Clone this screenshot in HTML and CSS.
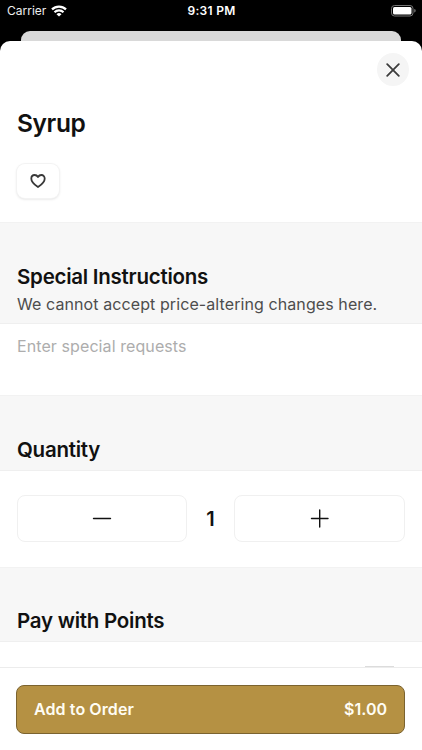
FILE: index.html
```html
<!DOCTYPE html>
<html lang="en">
<head>
<meta charset="utf-8">
<meta name="viewport" content="width=device-width, initial-scale=1">
<title>Syrup</title>
<link rel="stylesheet" href="styles.css">
</head>
<body>
<div class="screen">
  <header class="status">
    <div class="status-left">
      <span class="carrier">Carrier</span>
      <svg class="wifi" width="16" height="12" viewBox="0 0 16 12" fill="none" stroke="#fff" stroke-width="2.2">
        <path d="M1 4.400a10 10 0 0 1 14 0"/>
        <path d="M3.500 7.200a6.400 6.400 0 0 1 9 0"/>
        <path d="M8 11.600 5.500 9.200a3.600 3.600 0 0 1 5 0z" fill="#fff" stroke="none"/>
      </svg>
    </div>
    <span class="time">9:31 PM</span>
    <div class="status-right">
      <svg width="25" height="12" viewBox="0 0 25 12">
        <rect x="0.5" y="0.5" width="21.5" height="10.5" rx="3" fill="none" stroke="#747474"/>
        <rect x="2" y="2" width="18.5" height="7.500" rx="1.5" fill="#fff"/>
        <path d="M23.300 4v3.500c.9-.3 1.300-1 1.300-1.800s-.4-1.500-1.300-1.700z" fill="#858585"/>
      </svg>
    </div>
  </header>
  <div class="back-card"></div>
  <main class="sheet">
    <section class="product">
      <button class="close" aria-label="Close">
        <svg width="14" height="14" viewBox="0 0 14 14" stroke="#3c3c3c" stroke-width="1.8" stroke-linecap="round"><path d="M1.200 1.200l11.600 11.600M12.800 1.200L1.200 12.800"/></svg>
      </button>
      <h1>Syrup</h1>
      <button class="favorite" aria-label="Favorite">
        <svg width="16" height="14" viewBox="0 0 16 14" fill="none" stroke="#383838" stroke-width="1.8" stroke-linejoin="round"><path d="M8 3C7 1.400 5.800 1 4.700 1 2.600 1 1.300 2.600 1.300 4.700 1.300 8.200 5.400 11.300 8 13c2.600-1.700 6.700-4.800 6.700-8.300C14.700 2.600 13.400 1 11.300 1 10.200 1 9 1.400 8 3z"/></svg>
      </button>
    </section>
    <section class="group-head instructions-head">
      <h2>Special Instructions</h2>
      <p>We cannot accept price-altering changes here.</p>
    </section>
    <section class="request">Enter special requests</section>
    <section class="group-head quantity-head"><h2>Quantity</h2></section>
    <section class="stepper">
      <button class="step" aria-label="Decrease">
        <svg width="20" height="20" viewBox="0 0 20 20" stroke="#111" stroke-width="1.4" stroke-linecap="round"><path d="M1.500 9.500h17"/></svg>
      </button>
      <span class="count">1</span>
      <button class="step" aria-label="Increase">
        <svg width="20" height="20" viewBox="0 0 20 20" stroke="#111" stroke-width="1.4" stroke-linecap="round"><path d="M1.500 9.500h16.500M9.700 1v17"/></svg>
      </button>
    </section>
    <section class="group-head points-head"><h2>Pay with Points</h2></section>
    <section class="points"><span class="toggle"></span></section>
    <footer class="bar">
      <button class="add"><span>Add to Order</span><span class="price">$1.00</span></button>
    </footer>
  </main>
</div>
</body>
</html>
```
FILE: styles.css
```css
* { box-sizing: border-box; }
body { margin: 0; background: #000; font-family: Inter, "Liberation Sans", sans-serif; }
h1, h2, p { margin: 0; }
button { font: inherit; padding: 0; border: 0; display: flex; align-items: center; justify-content: center; }
svg { display: block; }
.screen { width: 422px; height: 750px; overflow: hidden; background: #000; display: flex; flex-direction: column; }
.status { height: 31px; flex: none; display: grid; grid-template-columns: 1fr auto 1fr; align-items: start; padding: 4px 6px 0 7px; color: #fff; }
.status-left { display: flex; gap: 5px; }
.carrier { font-size: 12px; line-height: 14px; color: #eee; }
.wifi { margin-top: 0.5px; }
.time { font-size: 12px; line-height: 14px; font-weight: 600; letter-spacing: 0.3px; }
.status-right { display: flex; justify-content: flex-end; padding-top: 1px; }
.back-card { height: 10px; flex: none; margin: 0 21px; background: #d9d9d9; border-radius: 9px 9px 0 0; }
.sheet { flex: 1; min-height: 0; overflow: hidden; background: #fff; border-radius: 10px 10px 0 0; display: flex; flex-direction: column; }
.sheet > * { flex: none; }
.product { height: 181px; padding: 12px 13px 0 17px; }
.close { width: 32px; height: 33px; border-radius: 50%; background: #f5f5f5; margin-left: auto; }
h1 { font-size: 24.5px; line-height: 30px; font-weight: 600; letter-spacing: -0.4px; margin-top: 22px; color: #111; }
.favorite { width: 42px; height: 34px; margin-top: 26px; border-radius: 8px; background: #fff; box-shadow: 0 0 0 1px #f3f3f3, 0 1px 3px rgba(0,0,0,.16); }
.group-head { background: #f7f7f7; border-top: 1px solid #f2f2f2; border-bottom: 1px solid #efefef; padding: 0 17px; color: #111; }
h2 { font-size: 20.5px; line-height: 26px; font-weight: 600; letter-spacing: -0.25px; }
.instructions-head { height: 102px; padding-top: 41px; }
.instructions-head p { font-size: 16px; line-height: 22px; letter-spacing: 0.09px; margin-top: 3px; color: #4d4d4d; }
.request { height: 71px; padding: 11px 17px; font-size: 16px; line-height: 22px; letter-spacing: 0.09px; color: #adadad; }
.quantity-head { height: 76px; padding-top: 41px; }
.stepper { height: 96px; padding: 24px 17px; display: grid; grid-template-columns: 170px 1fr 171px; }
.step { height: 47px; background: #fff; border: 1px solid #f0f0f0; border-radius: 8px; }
.count { font-size: 20px; line-height: 48px; font-weight: 600; text-align: center; color: #111; }
.points-head { height: 75px; padding-top: 40px; }
.points { height: 25px; display: flex; align-items: flex-end; justify-content: flex-end; padding-right: 28px; }
.toggle { width: 29px; height: 1px; background: #dcdcdc; }
.bar { height: 83px; background: #fff; border-top: 1px solid #ececec; padding: 17px 17px 0 16px; }
.add { width: 100%; height: 49px; border: 1px solid #7b632f; border-radius: 8px; background: #b59143; color: #fffdf4; font-size: 16px; font-weight: 600; letter-spacing: 0.1px; justify-content: space-between; padding: 0 17px 2px; }
.price { letter-spacing: 0; }
```
